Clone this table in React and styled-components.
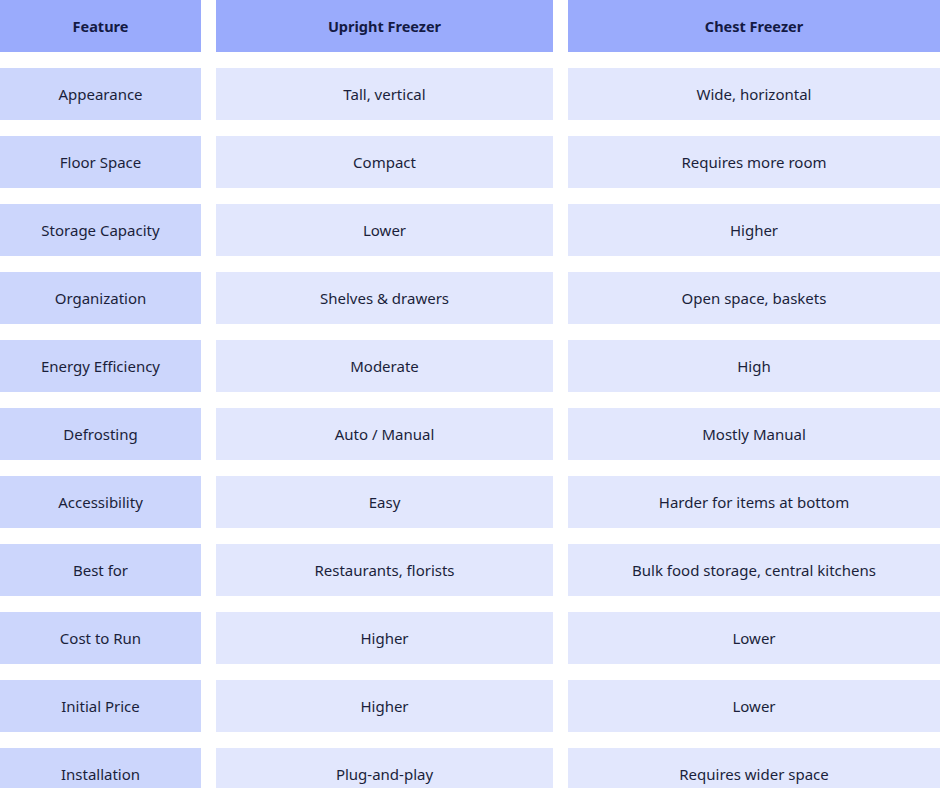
import React from 'react';
import styled, { createGlobalStyle } from 'styled-components';

const GlobalStyle = createGlobalStyle`
  html, body {
    margin: 0;
    padding: 0;
    background: #ffffff;
  }

  body {
    font-family: "Noto Sans", "Liberation Sans", sans-serif;
    color: #1b1f3b;
  }
`;

const Table = styled.div`
  display: grid;
  grid-template-columns: 201px 337px 372px;
  grid-auto-rows: 52px;
  column-gap: 15px;
  row-gap: 16px;
  width: 940px;
  height: 788px;
  overflow: hidden;
`;

const Cell = styled.div`
  display: flex;
  align-items: center;
  justify-content: center;
  background: ${({ $kind }) =>
    $kind === 'head' ? '#9aabfc' : $kind === 'feature' ? '#ccd6fc' : '#e2e7fd'};
  font-weight: ${({ $kind }) => ($kind === 'head' ? 700 : 400)};
  font-size: ${({ $kind }) => ($kind === 'head' ? '14.5px' : '15px')};
  color: ${({ $kind }) => ($kind === 'head' ? '#141a44' : '#1b1f3b')};
`;

const headers = ['Feature', 'Upright Freezer', 'Chest Freezer'];

const rows = [
  ['Appearance', 'Tall, vertical', 'Wide, horizontal'],
  ['Floor Space', 'Compact', 'Requires more room'],
  ['Storage Capacity', 'Lower', 'Higher'],
  ['Organization', 'Shelves & drawers', 'Open space, baskets'],
  ['Energy Efficiency', 'Moderate', 'High'],
  ['Defrosting', 'Auto / Manual', 'Mostly Manual'],
  ['Accessibility', 'Easy', 'Harder for items at bottom'],
  ['Best for', 'Restaurants, florists', 'Bulk food storage, central kitchens'],
  ['Cost to Run', 'Higher', 'Lower'],
  ['Initial Price', 'Higher', 'Lower'],
  ['Installation', 'Plug-and-play', 'Requires wider space'],
];

const App = () => (
  <>
    <GlobalStyle />
    <Table>
      {headers.map((h) => (
        <Cell key={h} $kind="head">{h}</Cell>
      ))}
      {rows.map((row) =>
        row.map((text, i) => (
          <Cell key={row[0] + i} $kind={i === 0 ? 'feature' : 'value'}>{text}</Cell>
        ))
      )}
    </Table>
  </>
);

export default App;
